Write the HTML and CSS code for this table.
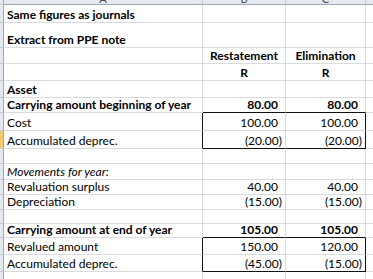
FILE: index.html
```html
<!DOCTYPE html>
<html>
<head>
<meta charset="utf-8">
<link rel="stylesheet" href="styles.css">
</head>
<body>
<table class="sheet">
  <colgroup>
    <col class="c-rh"><col class="c-a"><col class="c-b"><col class="c-c"><col class="c-d">
  </colgroup>
  <tr class="hdr">
    <td class="rh"></td>
    <td class="colh"><span>A</span></td>
    <td class="colh"><span>B</span></td>
    <td class="colh"><span>C</span></td>
    <td class="colh"></td>
  </tr>
  <tr class="h18"><td class="rh"></td><td class="b">Same figures as journals</td><td></td><td></td><td></td></tr>
  <tr class="h25"><td class="rh"></td><td class="b">Extract from PPE note</td><td></td><td></td><td></td></tr>
  <tr class="h16"><td class="rh"></td><td></td><td class="b ctr">Restatement</td><td class="b ctr">Elimination</td><td></td></tr>
  <tr class="h17"><td class="rh"></td><td></td><td class="b ctr">R</td><td class="b ctr">R</td><td></td></tr>
  <tr class="h17"><td class="rh"></td><td class="b">Asset</td><td></td><td></td><td></td></tr>
  <tr class="h15"><td class="rh"></td><td class="b">Carrying amount beginning of year</td><td class="b num bx-top">80.00</td><td class="b num bx-top">80.00</td><td></td></tr>
  <tr class="h18"><td class="rh"></td><td class="bx-left">Cost</td><td class="num">100.00</td><td class="num bx-right">100.00</td><td></td></tr>
  <tr class="h18"><td class="rh sel"></td><td class="bx-left">Accumulated deprec.</td><td class="num neg bx-bottom">(20.00)</td><td class="num neg bx-right bx-bottom">(20.00)</td><td></td></tr>
  <tr class="h15"><td class="rh"></td><td></td><td></td><td></td><td></td></tr>
  <tr class="h16"><td class="rh"></td><td class="i">Movements for year:</td><td></td><td></td><td></td></tr>
  <tr class="h15"><td class="rh"></td><td>Revaluation surplus</td><td class="num">40.00</td><td class="num">40.00</td><td></td></tr>
  <tr class="h15"><td class="rh"></td><td>Depreciation</td><td class="num neg">(15.00)</td><td class="num neg">(15.00)</td><td></td></tr>
  <tr class="h14"><td class="rh"></td><td></td><td></td><td></td><td></td></tr>
  <tr class="h14"><td class="rh"></td><td class="b">Carrying amount at end of year</td><td class="b num bx-top">105.00</td><td class="b num bx-top">105.00</td><td></td></tr>
  <tr class="h17"><td class="rh"></td><td class="bx-left">Revalued amount</td><td class="num">150.00</td><td class="num bx-right">120.00</td><td></td></tr>
  <tr class="h17"><td class="rh"></td><td class="bx-left">Accumulated deprec.</td><td class="num neg bx-bottom">(45.00)</td><td class="num neg bx-right bx-bottom">(15.00)</td><td></td></tr>
  <tr class="h15"><td class="rh"></td><td></td><td></td><td></td><td></td></tr>
</table>
</body>
</html>
```

FILE: styles.css
```css
html, body {
  margin: 0;
  padding: 0;
  background: #ffffff;
  overflow: hidden;
}

.sheet {
  border-collapse: separate;
  border-spacing: 0;
  table-layout: fixed;
  width: 380px;
  font-family: Lato, "Open Sans", sans-serif;
  font-size: 12px;
  color: #000;
}

.c-rh { width: 4px; }
.c-a { width: 199px; }
.c-b { width: 83px; }
.c-c { width: 80px; }
.c-d { width: 14px; }

.sheet td {
  border: 0;
  border-right: 1px solid #d9dbde;
  border-bottom: 1px solid #d9dbde;
  padding: 0 3px 1px 3px;
  vertical-align: bottom;
  white-space: nowrap;
  overflow: hidden;
  line-height: 12px;
}

.hdr { height: 5px; }

.sheet .hdr td {
  padding: 0;
  background: #e4e9f0;
  border-right-color: #c3cad3;
  border-bottom-color: #9fa9b5;
  position: relative;
  line-height: 4px;
}

.colh span {
  position: absolute;
  left: 0;
  right: 0;
  bottom: 0;
  height: 4px;
  overflow: hidden;
  display: flex;
  align-items: flex-end;
  justify-content: center;
  font-size: 11px;
  line-height: 11px;
  color: #4a4a4a;
}

.sheet td.rh {
  padding: 0;
  background: #e4e9f0;
  border-bottom-color: #c3cad3;
  border-right-color: #9fa9b5;
}

.sheet td.rh.sel {
  background: #f5c96e;
}

.h14 { height: 14px; }
.h15 { height: 15px; }
.h16 { height: 16px; }
.h17 { height: 17px; }
.h18 { height: 18px; }
.h25 { height: 25px; }

.b { font-weight: bold; }
.i { font-style: italic; }
.sheet td.ctr { text-align: center; }

.sheet td.num {
  text-align: right;
  padding-right: 7px;
}

.sheet td.num.neg {
  padding-right: 3px;
}

.sheet td.bx-top { border-bottom-color: #111; }
.sheet td.bx-left { border-right-color: #111; }
.sheet td.bx-right { border-right-color: #111; }
.sheet td.bx-bottom { border-bottom-color: #111; }
```
